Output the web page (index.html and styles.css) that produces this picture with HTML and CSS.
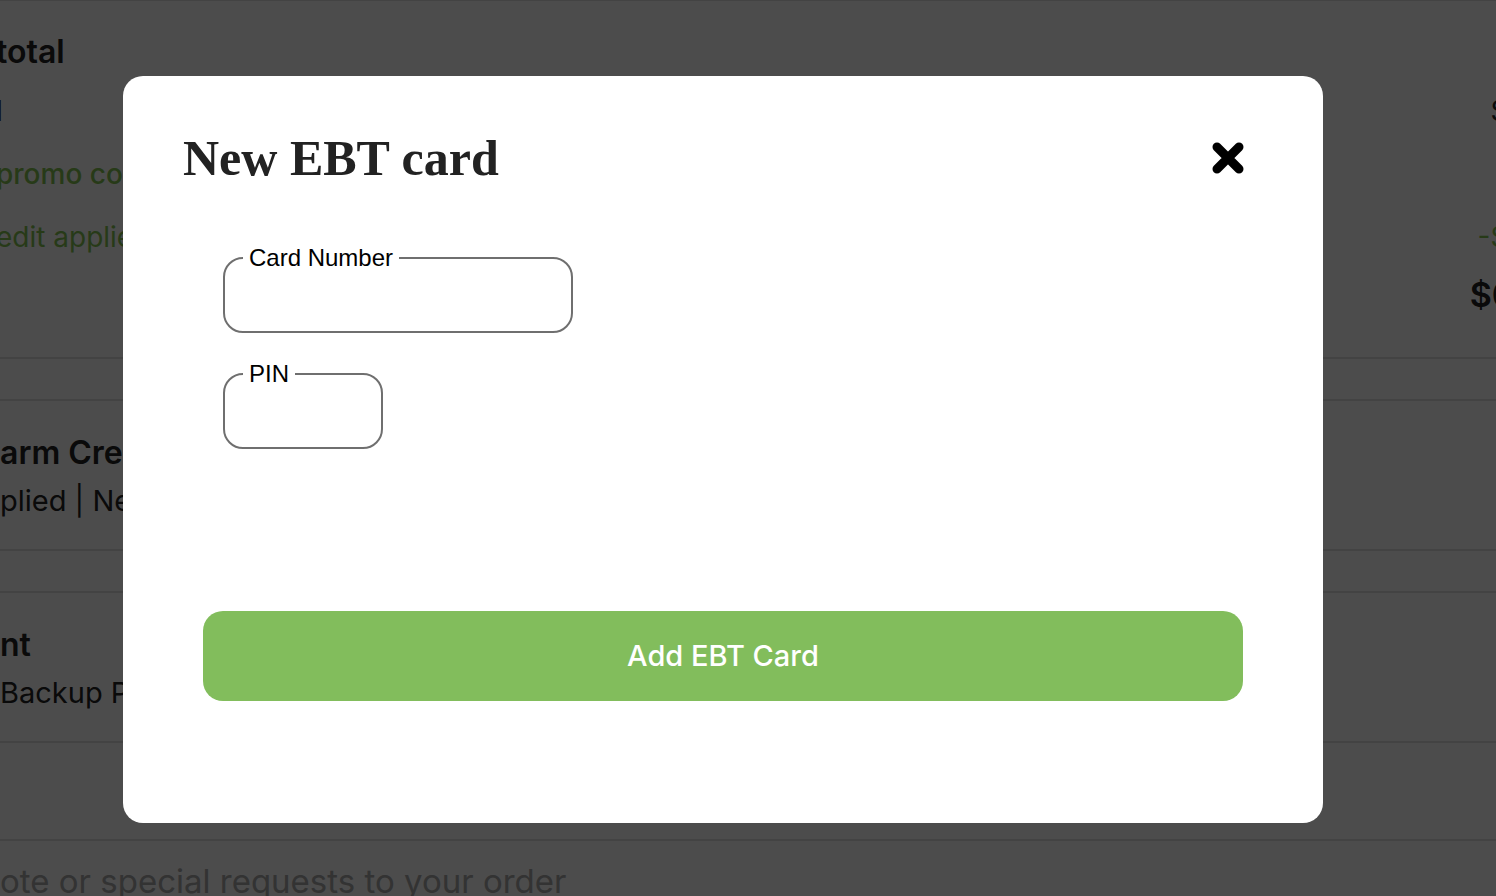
FILE: index.html
```html
<!DOCTYPE html>
<html lang="en">
<head>
<meta charset="utf-8">
<title>New EBT card</title>
<link rel="stylesheet" href="styles.css">
</head>
<body>
<main class="page">
  <section class="panel summary">
    <h2 class="heading">total</h2>
    <div class="row"><span>l</span><span>$0.00</span></div>
    <div class="row"><button class="promo" type="button">promo code</button></div>
    <div class="row credit"><span>edit applied</span><span>-$0.00</span></div>
    <div class="row grand"><span>$0.00</span></div>
  </section>
  <section class="panel option">
    <h2 class="heading">arm Credit</h2>
    <p class="detail">plied | New</p>
  </section>
  <section class="panel option">
    <h2 class="heading">nt</h2>
    <p class="detail">Backup Payment</p>
  </section>
  <section class="note">
    <textarea class="note-input" aria-label="Order note" placeholder="ote or special requests to your order"></textarea>
  </section>
</main>
<div class="overlay">
  <div class="modal" role="dialog" aria-modal="true" aria-labelledby="modal-title">
    <header class="modal-header">
      <h1 class="modal-title" id="modal-title">New EBT card</h1>
      <button class="close" type="button" aria-label="Close">
        <svg class="close-icon" viewBox="0 0 32 32" aria-hidden="true"><path d="M6 5 28 27M28 5 6 27"/></svg>
      </button>
    </header>
    <form class="form">
      <div class="fields">
        <fieldset class="field field-number">
          <legend class="legend"><label for="card-number">Card Number</label></legend>
          <input class="input" id="card-number" type="text" inputmode="numeric">
        </fieldset>
        <fieldset class="field field-pin">
          <legend class="legend"><label for="pin">PIN</label></legend>
          <input class="input" id="pin" type="password">
        </fieldset>
      </div>
      <button class="submit" type="submit">Add EBT Card</button>
    </form>
  </div>
</div>
</body>
</html>
```
FILE: styles.css
```css
* {
  box-sizing: border-box;
}

body {
  margin: 0;
  height: 100vh;
  overflow: hidden;
  background: #fff;
  color: #222;
  font-family: Inter, sans-serif;
  font-size: 28px;
  line-height: 36px;
}

h1, h2, p {
  margin: 0;
}

button {
  padding: 0;
  border: 0;
  background: none;
  color: inherit;
  font: inherit;
  cursor: pointer;
}

.page {
  margin: 0 -72px 0 -4px;
}

.panel {
  border-bottom: 2px solid #e2e2e2;
}

.heading {
  font-size: 32px;
  font-weight: 600;
  line-height: 40px;
}

.summary {
  padding: 31px 0 44px;
  border-top: 1px solid #e2e2e2;
}

.row {
  display: flex;
  justify-content: space-between;
  margin-top: 27px;
}

.summary .heading + .row {
  margin-top: 21px;
}

.promo,
.credit {
  color: #82c453;
}

.promo {
  font-weight: 500;
}

.grand {
  justify-content: flex-end;
  margin-top: 22px;
  font-size: 34px;
  font-weight: 600;
}

.option {
  margin-top: 40px;
  padding: 32px 0 30px 4px;
  border-top: 2px solid #e2e2e2;
}

.detail {
  margin-top: 10px;
  font-size: 29px;
}

.note {
  margin-top: 96px;
  padding: 20px 0 0 4px;
  border-top: 2px solid #e2e2e2;
}

.note-input {
  display: block;
  width: 100%;
  height: 40px;
  padding: 0;
  border: 0;
  resize: none;
  font: inherit;
  font-size: 33px;
  line-height: 40px;
}

.note-input::placeholder {
  color: #aaa;
}

.overlay {
  position: fixed;
  inset: 0;
  display: flex;
  align-items: center;
  justify-content: center;
  padding: 2px 50px 0 0;
  background: rgba(0, 0, 0, 0.7);
}

.modal {
  width: 1200px;
  max-width: 100%;
  padding: 50px 80px 122px 60px;
  border-radius: 20px;
  background: #fff;
}

.modal-header {
  display: flex;
  align-items: center;
  justify-content: space-between;
}

.modal-title {
  font-family: "Liberation Serif", serif;
  font-size: 50px;
  font-weight: 700;
  line-height: 64px;
}

.close-icon {
  display: block;
  width: 32px;
  height: 32px;
  overflow: visible;
  fill: none;
  stroke: #000;
  stroke-width: 9;
  stroke-linecap: round;
}

.form {
  padding: 54px 0 0 20px;
}

.fields {
  display: flex;
  flex-direction: column;
  gap: 27px;
  margin-bottom: 162px;
  padding-left: 20px;
}

.field {
  min-width: 0;
  margin: 0;
  padding: 0 18px;
  border: 2px solid #6f6f6f;
  border-radius: 20px;
  color: #000;
  font-family: "Liberation Sans", sans-serif;
  font-size: 24px;
  line-height: 28px;
}

.field-number {
  width: 350px;
}

.field-pin {
  width: 160px;
}

.legend {
  padding: 0 6px;
}

.input {
  display: block;
  width: 100%;
  height: 59px;
  padding: 0 6px 8px;
  border: 0;
  outline: 0;
  background: none;
  font: inherit;
}

.submit {
  width: 100%;
  height: 90px;
  border-radius: 20px;
  background: #82bd5c;
  color: #fff;
  font-size: 29px;
  font-weight: 500;
}
```
